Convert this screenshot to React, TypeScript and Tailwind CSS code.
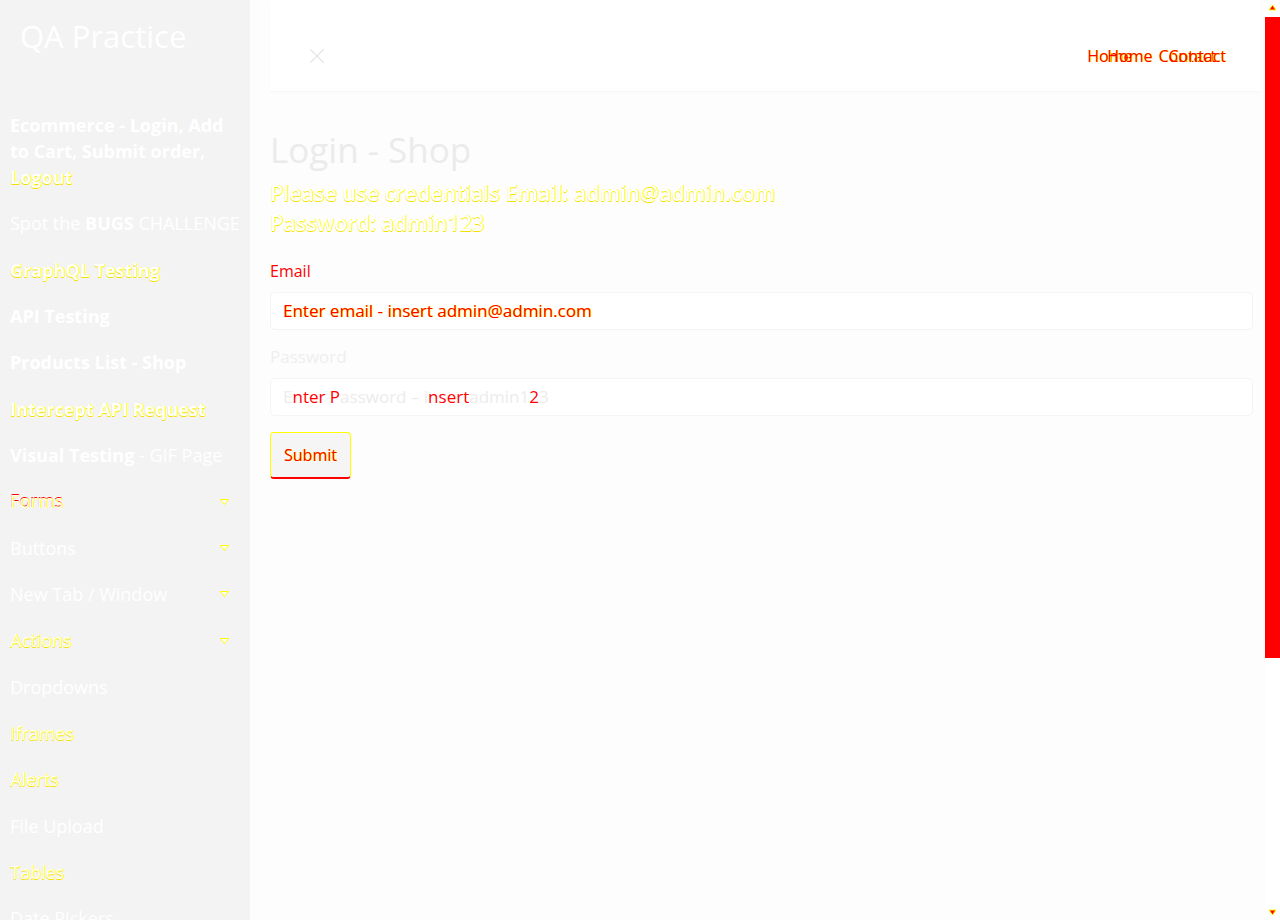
import { X } from 'lucide-react';

const hl = "[text-shadow:1px_0_0_#ff0,0_1px_0_#f5e000]";
const redHl = "text-[#f00] [text-shadow:1px_0_0_#ff0]";

function Caret() {
  return (
    <svg width="9" height="6" viewBox="0 0 9 6" className="shrink-0">
      <polygon points="0.5,0.5 8.5,0.5 4.5,5.5" fill="#ffffff" stroke="#ffff00" strokeWidth="1" />
    </svg>
  );
}

type Item = { label: React.ReactNode; caret?: boolean };

const items: Item[] = [
  { label: <span>Spot the <b className="font-bold">BUGS</b> CHALLENGE</span> },
  { label: <span className={`font-bold ${hl}`}>GraphQL Testing</span> },
  { label: <span className="font-bold">API Testing</span> },
  { label: <span className="font-bold">Products List - Shop</span> },
  { label: <span className={`font-bold ${hl}`}>Intercept API Request</span> },
  { label: <span><b className="font-bold">Visual Testing</b> - GIF Page</span> },
  { label: <span className="[text-shadow:1px_0_0_#ff0,0_-1px_0_#f00]">Forms</span>, caret: true },
  { label: <span>Buttons</span>, caret: true },
  { label: <span>New Tab / Window</span>, caret: true },
  { label: <span className={hl}>Actions</span>, caret: true },
  { label: <span>Dropdowns</span> },
  { label: <span className={hl}>Iframes</span> },
  { label: <span className={hl}>Alerts</span> },
  { label: <span>File Upload</span> },
  { label: <span className={hl}>Tables</span> },
  { label: <span>Date Pickers</span> },
];

function Sidebar() {
  return (
    <aside className="w-[250px] shrink-0 bg-[#f3f3f3] text-white">
      <div className="h-[102px] px-5 pt-[14px] text-[31px] leading-[44px]">QA Practice</div>
      <nav className="text-[18px]">
        <div className="px-[10px] pt-[10px] pb-[10.67px] font-bold leading-[26px]">
          Ecommerce - Login, Add<br />
          to Cart, Submit order,<br />
          <span className={hl}>Logout</span>
        </div>
        {items.map((it, i) => (
          <div key={i} className="flex h-[46.33px] items-center justify-between pl-[10px] pr-[21px] whitespace-nowrap">
            {it.label}
            {it.caret && <Caret />}
          </div>
        ))}
      </nav>
    </aside>
  );
}

function Header() {
  return (
    <header className="flex h-[92px] items-center justify-between border-b border-[#f7f7f7] bg-white pt-[20px] pl-[34px] pr-[34px] shadow-[0_1px_3px_rgba(0,0,0,0.015)]">
      <X className="h-[26px] w-[26px] text-[#e4e4e4]" strokeWidth={1} />
      <div className={`relative mr-[10px] flex gap-[26px] text-[16px] ${redHl}`}>
        <span>Home</span>
        <span>Contact</span>
        <span className="absolute left-[20px] top-0 flex gap-[16px]">
          <span>Home</span>
          <span>Contact</span>
        </span>
      </div>
    </header>
  );
}

function LoginForm() {
  return (
    <div className="pr-[7px] pt-[36px]">
      <h1 className="text-[35px] leading-[44px] text-[#ebebeb]">Login - Shop</h1>
      <p className={`mt-[6px] text-[21.5px] font-semibold leading-[30px] text-white ${hl}`}>
        Please use credentials Email: admin@admin.com<br />
        Password: admin123
      </p>
      <label className="mt-[22px] block text-[16px] leading-[22px] text-[#f00] [text-shadow:0_1px_0_#fff]">Email</label>
      <div className="mt-[10px] flex h-[38px] items-center rounded-[5px] border border-[#f4f4f4] bg-white px-[12px] text-[17px] text-[#f00] [text-shadow:1px_0_0_#ff0]">
        Enter email - insert admin@admin.com
      </div>
      <label className="mt-[16px] block text-[17px] leading-[22px] text-[#efefef]">Password</label>
      <div className="mt-[10px] flex h-[38px] items-center rounded-[5px] border border-[#f4f4f4] bg-white px-[12px] text-[17px] text-[#ececec]">
        E<span className="text-[#f00]">nter P</span>assword – i<span className="text-[#f00]">nsert</span> admin1<span className="text-[#f00]">2</span>3
      </div>
      <button className="mt-[16px] h-[47px] rounded-[4px] border border-[#ff0] border-b-2 border-b-[#f00] bg-[#f5f5f5] px-[13px] text-[16px] text-[#f00] [text-shadow:1px_0_0_#ff0]">
        Submit
      </button>
    </div>
  );
}

function Scrollbar() {
  return (
    <div className="flex w-[15px] shrink-0 flex-col items-center bg-white">
      <svg width="9" height="8" viewBox="0 0 9 8" className="mt-[4px]">
        <polygon points="4.5,1 8,6 1,6" fill="#f00" stroke="#ff0" strokeWidth="1" />
      </svg>
      <div className="mt-[5px] h-[641px] w-full bg-[#f00]" />
      <div className="flex-1" />
      <svg width="9" height="8" viewBox="0 0 9 8" className="mb-[4px]">
        <polygon points="1,2 8,2 4.5,7" fill="#f00" stroke="#ff0" strokeWidth="1" />
      </svg>
    </div>
  );
}

export default function App() {
  return (
    <div className="flex h-[920px] w-[1280px] overflow-hidden bg-[#fdfdfd] font-['Open_Sans',sans-serif]">
      <Sidebar />
      <main className="flex-1 pl-[20px] pr-[5px]">
        <Header />
        <LoginForm />
      </main>
      <Scrollbar />
    </div>
  );
}
